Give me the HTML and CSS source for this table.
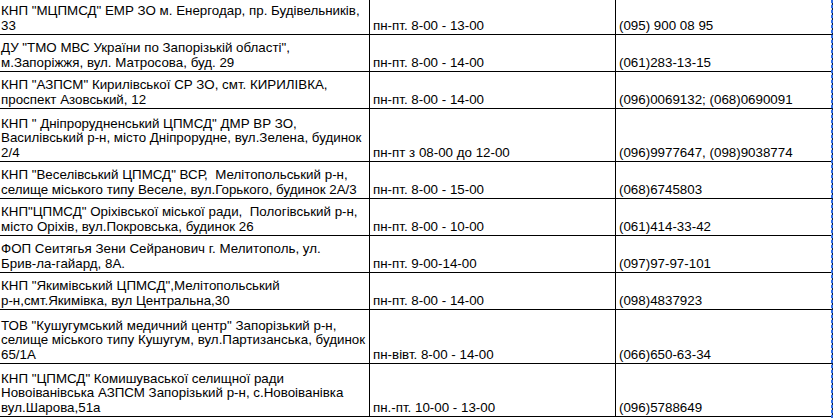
FILE: index.html
```html
<!DOCTYPE html>
<html lang="uk">
<head>
<meta charset="utf-8">
<title>Заклади</title>
<link rel="stylesheet" href="styles.css">
</head>
<body>
<div class="sheet">
<table class="grid">
<colgroup><col class="c1"><col class="c2"><col class="c3"></colgroup>
<tbody>
<tr class="h37"><td>КНП "МЦПМСД" ЕМР ЗО м. Енергодар, пр. Будівельників,<br>33</td><td>пн-пт. 8-00 - 13-00</td><td>(095) 900 08 95</td></tr>
<tr class="h37"><td>ДУ "ТМО МВС України по Запорізькій області",<br>м.Запоріжжя, вул. Матросова, буд. 29</td><td>пн-пт. 8-00 - 14-00</td><td>(061)283-13-15</td></tr>
<tr class="h37"><td>КНП "АЗПСМ" Кирилівської СР ЗО, смт. КИРИЛІВКА,<br>проспект Азовський, 12</td><td>пн-пт. 8-00 - 14-00</td><td>(096)0069132; (068)0690091</td></tr>
<tr class="h53"><td>КНП " Дніпрорудненський ЦПМСД" ДМР ВР ЗО,<br>Василівський р-н, місто Дніпрорудне, вул.Зелена, будинок<br>2/4</td><td>пн-пт з 08-00 до 12-00</td><td>(096)9977647, (098)9038774</td></tr>
<tr class="h37"><td>КНП "Веселівський ЦПМСД" ВСР,&nbsp; Мелітопольський р-н,<br>селище міського типу Веселе, вул.Горького, будинок 2А/3</td><td>пн-пт. 8-00 - 15-00</td><td>(068)6745803</td></tr>
<tr class="h37"><td>КНП"ЦПМСД" Оріхівської міської ради,&nbsp; Пологівський р-н,<br>місто Оріхів, вул.Покровська, будинок 26</td><td>пн-пт. 8-00 - 10-00</td><td>(061)414-33-42</td></tr>
<tr class="h37"><td>ФОП Сеитягья Зени Сейранович г. Мелитополь, ул.<br>Брив-ла-гайард, 8А.</td><td>пн-пт. 9-00-14-00</td><td>(097)97-97-101</td></tr>
<tr class="h37"><td>КНП "Якимівський ЦПМСД",Мелітопольський<br>р-н,смт.Якимівка, вул Центральна,30</td><td>пн-пт. 8-00 - 14-00</td><td>(098)4837923</td></tr>
<tr class="h54"><td>ТОВ "Кушугумський медичний центр" Запорізький р-н,<br>селище міського типу Кушугум, вул.Партизанська, будинок<br>65/1А</td><td>пн-вівт. 8-00 - 14-00</td><td>(066)650-63-34</td></tr>
<tr class="h53"><td>КНП "ЦПМСД" Комишуваської селищної ради<br>Новоіванівська АЗПСМ Запорізький р-н, с.Новоіванівка<br>вул.Шарова,51а</td><td>пн.-пт. 10-00 - 13-00</td><td>(096)5788649</td></tr>
</tbody>
</table>
</div>
</body>
</html>
```
FILE: styles.css
```css
html, body {
  margin: 0;
  padding: 0;
  background: #fff;
}
.sheet {
  position: relative;
  width: 836px;
  height: 418px;
  overflow: hidden;
}
.sheet::after {
  content: "";
  position: absolute;
  left: 831px;
  top: 0;
  width: 2px;
  height: 418px;
  background: repeating-linear-gradient(to bottom, #2f6be0 0 3px, rgba(47,107,224,0.25) 3px 5px);
}
.grid {
  border-collapse: collapse;
  table-layout: fixed;
  width: 835px;
  margin: -3px 0 0 -3px;
  font: 13.35px/14.5px "Liberation Sans", Arial, Helvetica, sans-serif;
  color: #000;
}
.c1 { width: 372px; }
.c2 { width: 246px; }
.c3 { width: 217px; }
.grid td {
  border: 1px solid #000;
  padding: 0 3px 1px 3px;
  vertical-align: bottom;
  white-space: nowrap;
  overflow: hidden;
}
.h37 { height: 37px; }
.h53 { height: 53px; }
.h54 { height: 54px; }
```
